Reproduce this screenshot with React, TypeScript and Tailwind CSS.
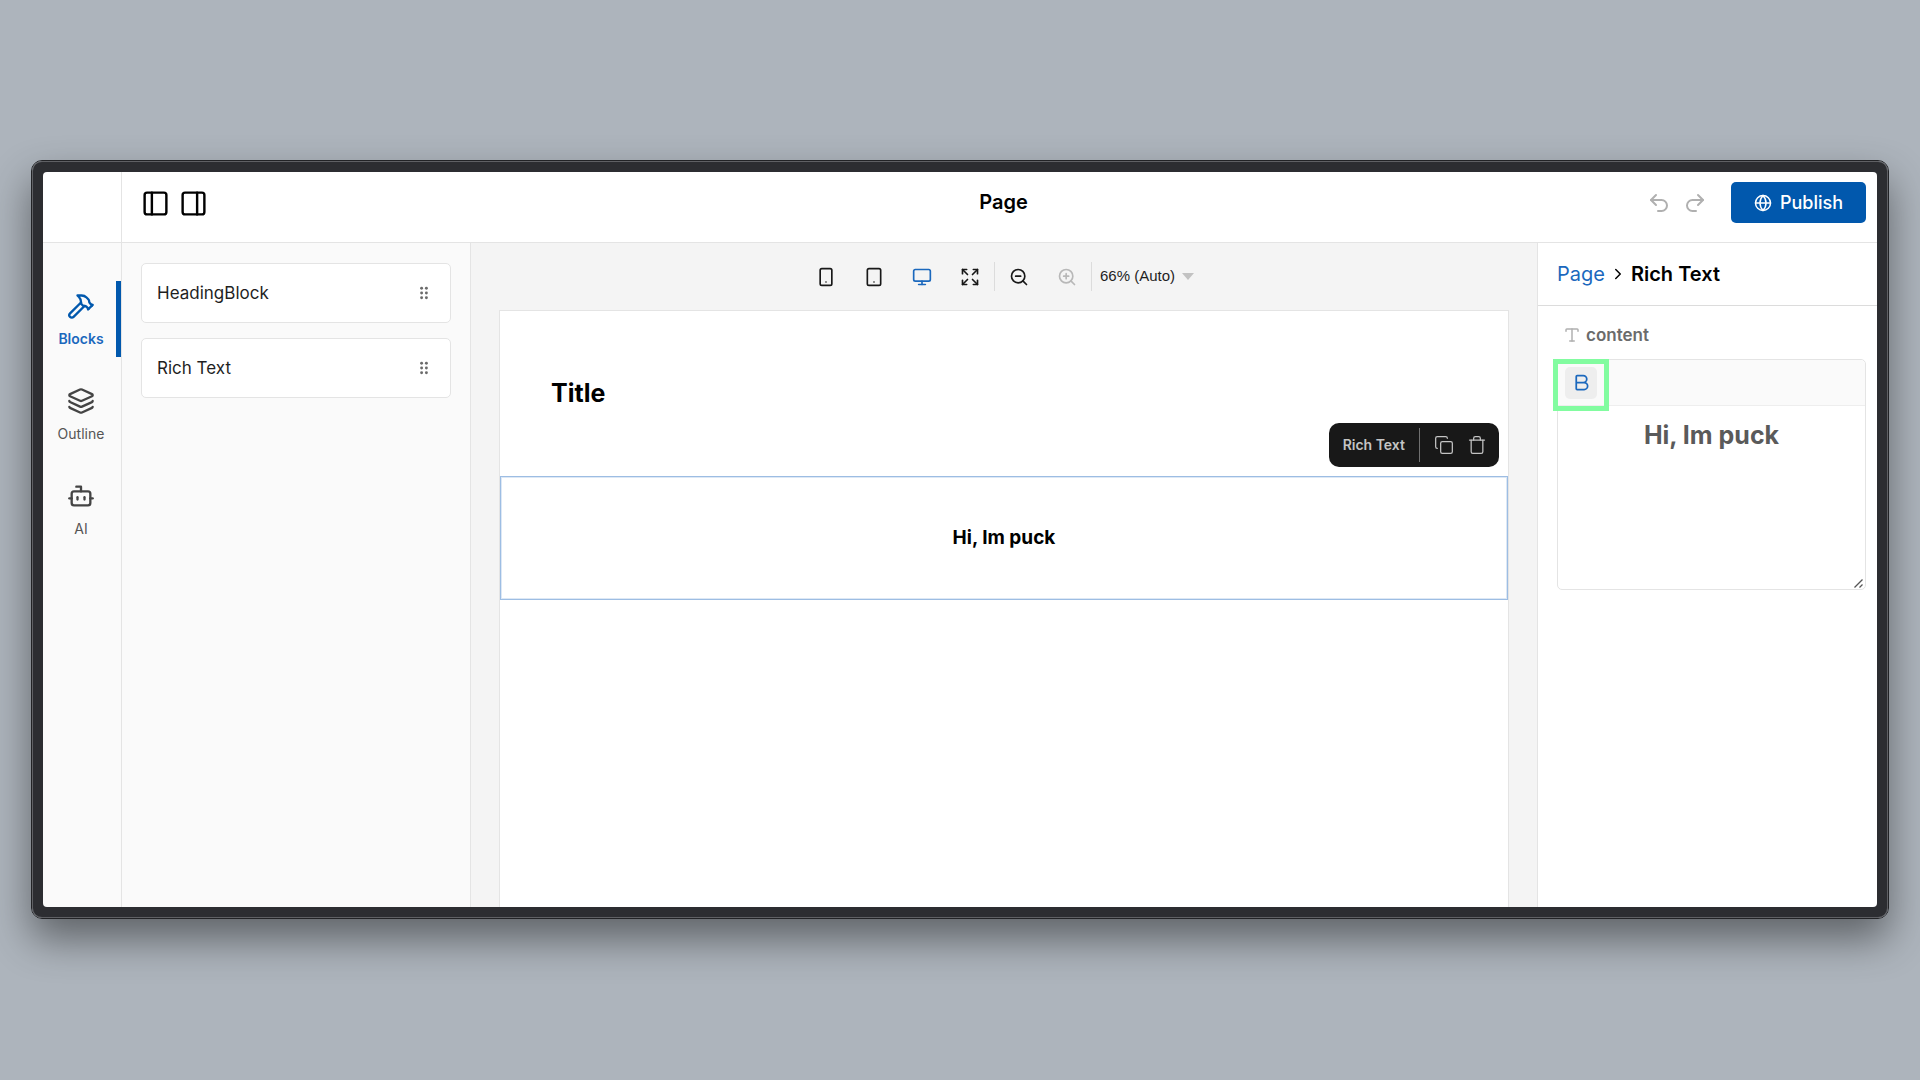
import React from "react";
import {
  Bold,
  Bot,
  ChevronRight,
  Copy,
  Expand,
  Globe,
  Hammer,
  Layers,
  Monitor,
  PanelLeft,
  PanelRight,
  Redo2,
  Smartphone,
  Tablet,
  Trash,
  Type,
  Undo2,
  ZoomIn,
  ZoomOut,
} from "lucide-react";

const navItems = [
  { label: "Blocks", icon: Hammer, active: true },
  { label: "Outline", icon: Layers, active: false },
  { label: "AI", icon: Bot, active: false },
];

const blocks = ["HeadingBlock", "Rich Text"];

const viewports = [
  { label: "Small viewport", icon: Smartphone, active: false },
  { label: "Medium viewport", icon: Tablet, active: false },
  { label: "Large viewport", icon: Monitor, active: true },
  { label: "Full width", icon: Expand, active: false },
];

const DragIcon = () => (
  <svg width="16" height="16" viewBox="0 0 20 20" fill="currentColor">
    {[4, 10, 16].map((y) => (
      <React.Fragment key={y}>
        <circle cx="7" cy={y} r="1.8" />
        <circle cx="13" cy={y} r="1.8" />
      </React.Fragment>
    ))}
  </svg>
);

const Header = () => (
  <header className="flex h-[71px] shrink-0 border-b border-[#e4e4e4] bg-white">
    <div className="w-[79px] shrink-0 border-r border-[#e4e4e4]" />
    <div className="grid flex-1 grid-cols-[1fr_auto_1fr] items-start pl-[19px] pr-[11px] pt-[10px]">
      <div className="flex h-[43px] items-center gap-[9px]">
        <button aria-label="Toggle left sidebar">
          <PanelLeft size={29} />
        </button>
        <button aria-label="Toggle right sidebar">
          <PanelRight size={29} />
        </button>
      </div>
      <h1 className="flex h-10 items-center text-xl font-semibold">Page</h1>
      <div className="flex items-center justify-end">
        <div className="mr-6 flex gap-3 text-[#b0b0b0]">
          <button aria-label="Undo">
            <Undo2 size={24} />
          </button>
          <button aria-label="Redo">
            <Redo2 size={24} />
          </button>
        </div>
        <button className="flex h-[41px] items-center gap-2 rounded-[5px] bg-[#0158ad] px-[23px] text-lg font-medium text-white">
          <Globe size={18} />
          Publish
        </button>
      </div>
    </div>
  </header>
);

const Nav = () => (
  <nav className="flex w-[79px] shrink-0 flex-col gap-[19px] border-r border-[#e4e4e4] bg-[#fafafa] pt-[38px]">
    {navItems.map(({ label, icon: Icon, active }) => (
      <button
        key={label}
        className={
          active
            ? "flex h-[76px] flex-col items-center gap-[9px] border-r-[5px] border-[#0158ad] pl-[3px] pt-[11px] text-sm font-semibold text-[#1b68bd]"
            : "flex h-[76px] flex-col items-center gap-[9px] pr-[2px] pt-[11px] text-sm text-[#555555]"
        }
      >
        <Icon
          size={28}
          className={active ? "text-[#0158ad]" : "text-[#444444]"}
        />
        {label}
      </button>
    ))}
  </nav>
);

const BlockList = () => (
  <aside className="flex w-[349px] shrink-0 flex-col gap-[15px] border-r border-[#e4e4e4] bg-[#fafafa] px-[19px] pt-5">
    {blocks.map((name) => (
      <div
        key={name}
        className="flex h-[60px] items-center justify-between rounded-[5px] border border-[#e4e4e4] bg-white pl-[15px] pr-[18px] text-[17px] leading-7 text-[#1f1f1f]"
      >
        {name}
        <span className="text-[#6b6b6b]">
          <DragIcon />
        </span>
      </div>
    ))}
  </aside>
);

const Controls = () => (
  <div className="flex h-[67px] items-center justify-center">
    {viewports.map(({ label, icon: Icon, active }) => (
      <button
        key={label}
        aria-label={label}
        className={
          active
            ? "flex w-12 justify-center text-[#1b68bd]"
            : "flex w-12 justify-center text-[#181818]"
        }
      >
        <Icon size={20} />
      </button>
    ))}
    <div className="h-[29px] w-px bg-[#dcdcdc]" />
    <button
      aria-label="Zoom out"
      className="flex w-12 justify-center text-[#181818]"
    >
      <ZoomOut size={20} />
    </button>
    <button
      aria-label="Zoom in"
      className="flex w-12 justify-center text-[#b8b8b8]"
    >
      <ZoomIn size={20} />
    </button>
    <div className="h-[29px] w-px bg-[#dcdcdc]" />
    <div className="relative ml-2 mr-3 flex items-center">
      <select
        aria-label="Zoom level"
        className="appearance-none bg-transparent pr-[18px] font-['Liberation_Sans',sans-serif] text-[15px] text-[#1f1f1f]"
      >
        <option>66% (Auto)</option>
      </select>
      <svg
        className="pointer-events-none absolute right-0"
        width="12"
        height="7"
        viewBox="0 0 12 7"
        fill="#c2c2c2"
      >
        <path d="M0 0h12L6 7z" />
      </svg>
    </div>
  </div>
);

const ActionBar = () => (
  <div className="absolute bottom-full right-2 mb-[10px] flex h-11 items-center rounded-[10px] bg-[#181818] pl-[14px] pr-3 text-[#c4c4c4]">
    <span className="text-sm font-semibold">Rich Text</span>
    <div className="mx-[14px] h-[34px] w-px bg-[#707070]" />
    <div className="flex gap-[13px]">
      <button aria-label="Duplicate">
        <Copy size={20} strokeWidth={1.5} />
      </button>
      <button aria-label="Delete">
        <Trash size={20} strokeWidth={1.5} />
      </button>
    </div>
  </div>
);

const Canvas = () => (
  <main className="flex min-w-0 flex-1 flex-col bg-[#f4f4f4] px-7">
    <Controls />
    <div className="flex-1 border-x border-t border-[#e4e4e4] bg-white">
      <h2 className="flex h-[165px] items-center px-[51px] text-[25px] font-bold">
        Title
      </h2>
      <div className="relative flex h-[124px] items-center justify-center border border-[#9dbde3] inset-shadow-[0_0_0_1px_#dde8f5]">
        <ActionBar />
        <p className="text-[19px] font-bold">Hi, Im puck</p>
      </div>
    </div>
  </main>
);

const Fields = () => (
  <aside className="w-[340px] shrink-0 border-l border-[#e4e4e4] bg-white">
    <div className="flex h-[63px] items-center gap-1 border-b border-[#dcdcdc] pl-[19px] text-xl">
      <a href="#" className="text-[#1b68bd]">
        Page
      </a>
      <ChevronRight size={18} />
      <h2 className="font-semibold">Rich Text</h2>
    </div>
    <div className="pl-[19px] pr-[11px] pt-[17px]">
      <label
        htmlFor="content"
        className="flex items-center gap-[5px] pl-[6px] text-[17px] leading-6 font-semibold text-[#6b6b6b]"
      >
        <Type size={18} className="text-[#b0b0b0]" />
        content
      </label>
      <div className="relative mt-3 rounded-[5px] border border-[#e4e4e4]">
        <div className="flex h-[46px] items-center rounded-t-[5px] border-b border-[#eeeeee] bg-[#fafafa] pl-[7px]">
          <button
            aria-label="Bold"
            className="relative flex size-8 items-center justify-center rounded-[5px] bg-[#eeeeee] text-[#1b68bd]"
          >
            <Bold size={21} />
            {/* tour highlight */}
            <span className="absolute -inset-x-3 -top-2 -bottom-3 border-[5px] border-[#82fca0]" />
          </button>
        </div>
        <textarea
          id="content"
          defaultValue="Hi, Im puck"
          className="block h-[183px] w-full resize-none pt-[11px] text-center text-[25px] font-bold text-[#5a5a5a] outline-none"
        />
        <svg
          className="pointer-events-none absolute right-[2px] bottom-[1px]"
          width="9"
          height="9"
          viewBox="0 0 9 9"
          stroke="#555555"
          strokeWidth="1.3"
        >
          <path d="M0.5 8.5l8-8M5.5 8.5l3-3" />
        </svg>
      </div>
    </div>
  </aside>
);

const App = () => {
  return (
    <div className="flex min-h-screen bg-[#adb4bc] px-[31px] pt-40 pb-[161px] font-['Inter',sans-serif] text-black">
      <div className="flex flex-1 rounded-[11px] border border-[#222326] shadow-[0_20px_40px_rgba(0,0,0,0.45)]">
        <div className="flex flex-1 rounded-[10px] border border-[#5f6064] bg-[#2c2d31] p-[10px]">
          <div className="flex flex-1 flex-col overflow-hidden rounded-[4px]">
            <Header />
            <div className="flex flex-1">
              <Nav />
              <BlockList />
              <Canvas />
              <Fields />
            </div>
          </div>
        </div>
      </div>
    </div>
  );
};

export default App;
